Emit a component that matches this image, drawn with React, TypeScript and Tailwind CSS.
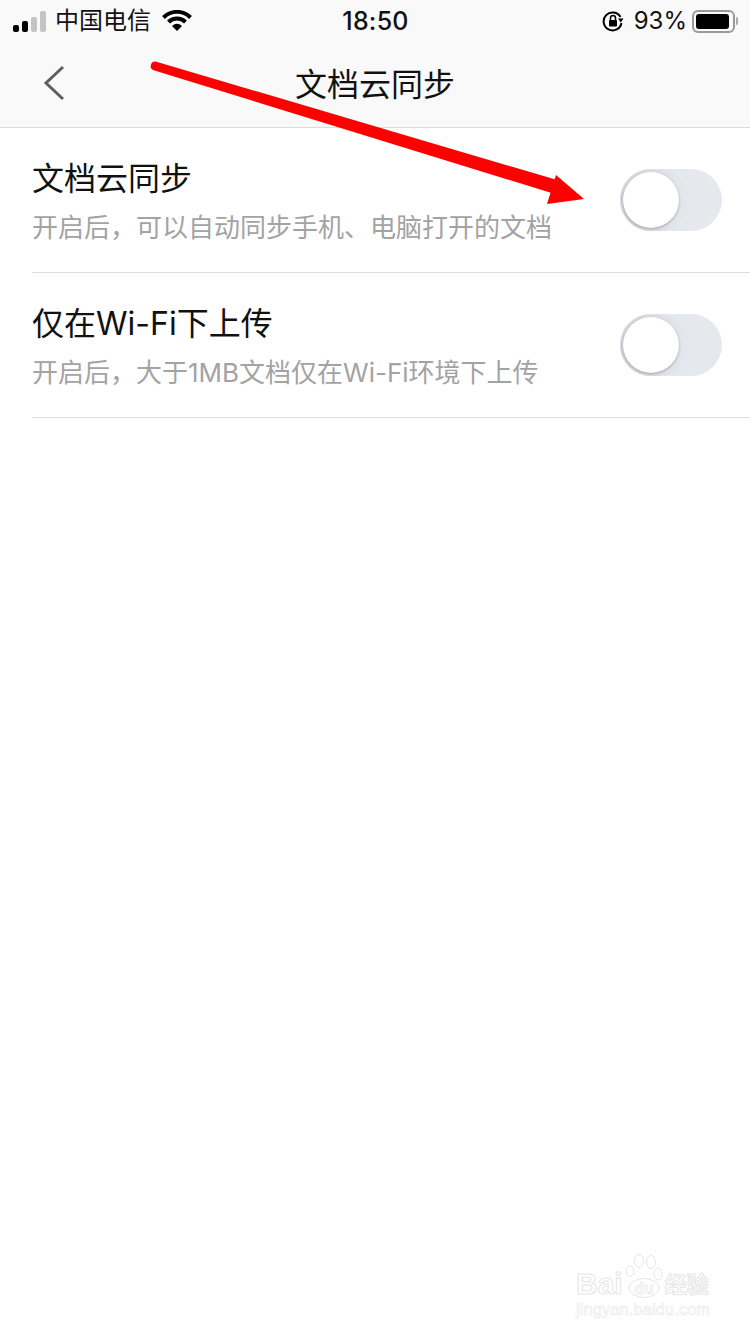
const FONT = "[font-family:Inter,'Noto_Sans_CJK_SC',sans-serif]";

function Toggle() {
  return (
    <div className="relative mt-[12px] h-[62px] w-[102px] shrink-0 rounded-full bg-[#e5e8ed]">
      <div className="absolute inset-y-0 left-0 w-[70px] rounded-full bg-gradient-to-r from-[#d3d6da] to-[#e5e8ed]" />
      <div className="absolute left-[3px] top-[3px] h-[56px] w-[56px] rounded-full bg-white shadow-[0_1px_3px_rgba(0,0,0,0.28)]" />
    </div>
  );
}

function Row({ title, sub }: { title: string; sub: string }) {
  return (
    <div className="ml-8 flex h-[145px] items-start justify-between border-b border-[#dcdcdc] pr-7 pt-[29px]">
      <div className="flex flex-col">
        <div className="text-[32px] leading-[44px] text-[#111]">{title}</div>
        <div className="mt-[9px] text-[26px] leading-[36px] text-[#a3a3a3]">{sub}</div>
      </div>
      <Toggle />
    </div>
  );
}

function StatusBar() {
  return (
    <div className="flex h-[42px] items-center justify-between pl-[13px] pr-[12px]">
      <div className="flex w-[200px] items-center">
        <div className="flex items-end gap-[3px]">
          <div className="h-[7px] w-[6px] rounded-[2px] bg-black" />
          <div className="h-[11px] w-[6px] rounded-[2px] bg-black" />
          <div className="h-[15px] w-[6px] rounded-[2px] bg-[#c4c4c4]" />
          <div className="h-[21px] w-[6px] rounded-[2px] bg-[#c4c4c4]" />
        </div>
        <span className="ml-[9px] text-[24px] leading-none text-[#111]">中国电信</span>
        <svg className="ml-[11px]" width="30" height="22" viewBox="0 0 30 22">
          <path d="M1.5 7.5 A19 19 0 0 1 28.500 7.500" fill="none" stroke="#000" strokeWidth="4" />
          <path d="M6.500 12 A12 12 0 0 1 23.500 12" fill="none" stroke="#000" strokeWidth="4" />
          <path d="M10 16 Q15 11.500 20 16 L15 21 Z" fill="#000" />
        </svg>
      </div>
      <div className="text-[25px] font-medium leading-none tracking-[0.2px] text-[#111]">18:50</div>
      <div className="flex w-[200px] items-center justify-end">
        <svg width="22" height="22" viewBox="0 0 22 22">
          <path d="M18.500 7 A9 9 0 1 0 19.500 13" fill="none" stroke="#000" strokeWidth="2" />
          <path d="M16 8.500 L21.500 8.500 L18.800 12.500 Z" fill="#000" />
          <rect x="7" y="10" width="8" height="6.500" rx="1" fill="#000" />
          <path d="M8.500 10 V8 a2.500 2.500 0 0 1 5 0 V10" fill="none" stroke="#000" strokeWidth="1.500" />
        </svg>
        <span className="ml-[10px] text-[24px] leading-none text-[#111]">93%</span>
        <div className="ml-[5px] flex h-[23px] w-[43px] items-center rounded-[6px] border-2 border-[#999] p-[2px]">
          <div className="h-full w-[33px] rounded-[3px] bg-black" />
        </div>
        <div className="ml-[1px] h-[8px] w-[2px] rounded-r-full bg-[#aaa]" />
      </div>
    </div>
  );
}

export default function App() {
  return (
    <div className={`relative h-[1334px] w-[750px] overflow-hidden bg-white ${FONT}`}>
      <div className="border-b border-[#dcdcdc] bg-[#f9f9f9]">
        <StatusBar />
        <div className="relative flex h-[85px] items-center justify-center">
          <svg className="absolute left-[42px] top-[23px]" width="24" height="36" viewBox="0 0 24 36">
            <path d="M21 2 L4 18 L21 34" fill="none" stroke="#5f5f5f" strokeWidth="3" />
          </svg>
          <div className="text-[32px] leading-none text-[#111]">文档云同步</div>
        </div>
      </div>
      <Row title="文档云同步" sub={"开启后\uFF0C可以自动同步手机、电脑打开的文档"} />
      <Row title="仅在Wi-Fi下上传" sub={"开启后\uFF0C大于1MB文档仅在Wi-Fi环境下上传"} />

      <svg className="absolute left-0 top-0" width="750" height="300" viewBox="0 0 750 300">
        <path d="M156.300 61.700 L558 180.300 L554 193.700 L153.700 70.300 A4.500 4.500 0 0 1 156.300 61.700 Z" fill="#fe0000" />
        <path d="M556 175 L584 199 L547 204 Z" fill="#fe0000" />
      </svg>

      <div className="absolute left-[576px] top-[1253px] w-[140px]">
        <div className="flex items-end">
          <span className="text-[30px] font-bold leading-none text-white [-webkit-text-stroke:1px_#e6e6e6] [font-family:'Liberation_Sans',sans-serif]">Bai</span>
          <svg width="40" height="46" viewBox="0 0 40 46" className="shrink-0">
            <g fill="#fff" stroke="#e6e6e6" strokeWidth="1">
              <ellipse cx="7" cy="18" rx="4" ry="5.500" />
              <ellipse cx="16" cy="8" rx="4.500" ry="6.500" />
              <ellipse cx="28" cy="9" rx="4.500" ry="6.500" />
              <ellipse cx="35" cy="21" rx="4" ry="6" />
              <ellipse cx="21" cy="35" rx="15" ry="9.500" />
            </g>
            <text x="21" y="41" textAnchor="middle" fontSize="16" fontWeight="700" fill="#fff" stroke="#e6e6e6" strokeWidth="0.7" fontFamily="Liberation Sans">du</text>
          </svg>
          <span className="mb-[4px] ml-[2px] whitespace-nowrap text-[22px] font-bold leading-none text-white [-webkit-text-stroke:1px_#e6e6e6]">经验</span>
        </div>
        <div className="mt-[3px] text-[16px] leading-none tracking-[0.3px] text-white [-webkit-text-stroke:0.7px_#ececec] [font-family:'Liberation_Sans',sans-serif]">jingyan.baidu.com</div>
      </div>
    </div>
  );
}
